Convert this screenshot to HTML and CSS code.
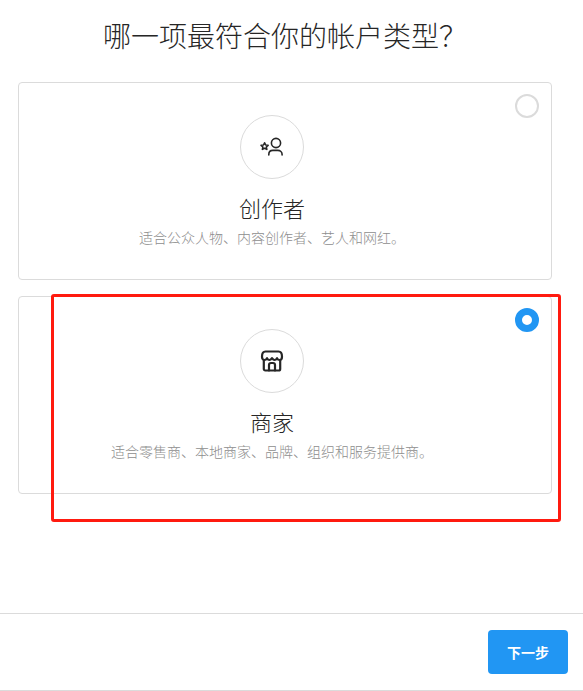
FILE: index.html
```html
<!DOCTYPE html>
<html lang="zh-CN">
<head>
<meta charset="utf-8">
<title>帐户类型</title>
<link rel="stylesheet" href="styles.css">
</head>
<body>
<main class="page">
  <h1 class="title">哪一项最符合你的帐户类型？</h1>
  <div class="cards">
    <section class="card">
      <span class="radio"></span>
      <div class="avatar">
        <svg class="icon" viewBox="0 0 24 24" fill="none" stroke="#262626" stroke-width="1.6" stroke-linecap="round" stroke-linejoin="round">
          <circle cx="16" cy="8" r="4.600"/>
          <path d="M8.800 20v-.6c0-2.400 1.800-4 4-4h5c2.400 0 4.300 1.700 4.300 4v.6"/>
          <path d="M4.600 7.800l1.100 2.200 2.400.3-1.800 1.700.5 2.400-2.200-1.200-2.200 1.200.5-2.400-1.800-1.700 2.400-.3z"/>
        </svg>
      </div>
      <h2 class="card-title">创作者</h2>
      <p class="card-desc">适合公众人物、内容创作者、艺人和网红。</p>
    </section>
    <section class="card">
      <span class="radio radio-on"></span>
      <div class="avatar">
        <svg class="icon" viewBox="0 0 24 24" fill="none" stroke="#262626" stroke-width="2.200" stroke-linecap="round" stroke-linejoin="round">
          <path d="M3.800 11.500V20a1.500 1.500 0 0 0 1.500 1.500h13.400a1.500 1.500 0 0 0 1.500-1.500v-8.500"/>
          <path d="M5.500 2.500h13c2.200 0 3.500 2.200 3.500 5.200 0 1.900-1 3.300-2.500 3.300-1.300 0-2-.8-2.500-1.800-.5 1-1.300 1.800-2.500 1.800s-1.800-.8-2.500-1.800c-.7 1-1.300 1.800-2.500 1.800S7.500 10.200 7 9.200C6.500 10.200 5.800 11 4.500 11 3 11 2 9.600 2 7.700c0-3 1.300-5.200 3.500-5.200z"/>
          <path d="M9 21.500V16a2 2 0 0 1 2-2h2a2 2 0 0 1 2 2v5.500"/>
        </svg>
      </div>
      <h2 class="card-title">商家</h2>
      <p class="card-desc">适合零售商、本地商家、品牌、组织和服务提供商。</p>
    </section>
  </div>
  <div class="highlight"></div>
  <footer class="footer">
    <button class="next" type="button">下一步</button>
  </footer>
</main>
</body>
</html>
```
FILE: styles.css
```css
* { box-sizing: border-box; }
html, body { margin: 0; padding: 0; height: 100%; overflow: hidden; background: #fff; }
body { font-family: "Noto Sans CJK SC", "Liberation Sans", sans-serif; color: #262626; }
.page { position: relative; height: 691px; display: flex; flex-direction: column; }
.title {
  margin: 0; padding-top: 14px; width: 570px; height: 82px;
  text-align: center; font-size: 28px; line-height: 42px; font-weight: 300; color: #262626;
}
.cards { display: flex; flex-direction: column; gap: 16px; padding: 0 31px 0 18px; }
.card {
  position: relative; height: 198px; border: 1px solid #dbdbdb; border-radius: 4px;
  display: flex; flex-direction: column; align-items: center; padding: 32px 26px 0 0;
}
.radio {
  position: absolute; top: 11px; right: 12px; width: 24px; height: 24px;
  border: 2px solid #dbdbdb; border-radius: 50%; background: #fff;
}
.radio-on { border: 7px solid #2196f3; }
.avatar {
  width: 64px; height: 64px; border: 1px solid #dbdbdb; border-radius: 50%;
  display: flex; align-items: center; justify-content: center;
}
.icon { width: 24px; height: 24px; }
.card-title { margin: 12px 0 0; font-size: 22px; line-height: 32px; font-weight: 300; color: #262626; }
.card-desc { margin: 5px 0 0; font-size: 14px; line-height: 18px; font-weight: 300; color: #8e8e8e; }
.highlight {
  position: absolute; left: 51px; top: 294px; width: 510px; height: 228px;
  border: 3px solid #ff1a0f; border-radius: 3px; pointer-events: none;
}
.footer {
  position: absolute; left: 0; right: 0; top: 613px; height: 78px;
  border-top: 1px solid #dbdbdb; border-bottom: 1px solid #dbdbdb;
  display: flex; justify-content: flex-end; align-items: flex-start; padding: 16px 15px 0 0;
}
.next {
  width: 80px; height: 44px; border: 0; border-radius: 4px; background: #2196f3; color: #fff;
  font-family: inherit; font-size: 14px; font-weight: 700; padding: 0;
}
```
